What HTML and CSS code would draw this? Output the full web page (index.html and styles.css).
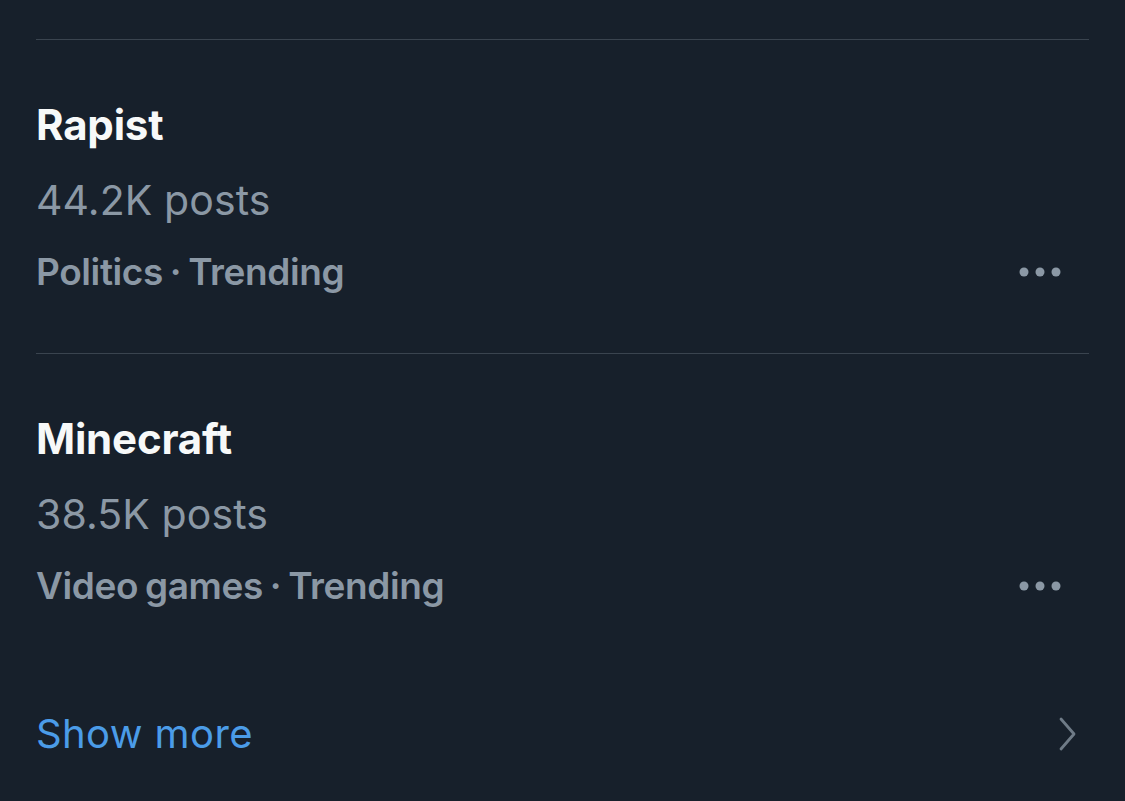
FILE: index.html
```html
<!DOCTYPE html>
<html>
<head>
<meta charset="utf-8">
<link rel="stylesheet" href="styles.css">
</head>
<body>
<div class="panel">
  <div class="trend">
    <div class="title">Rapist</div>
    <div class="count">44.2K posts</div>
    <div class="meta-row">
      <span class="meta">Politics · Trending</span>
      <svg class="dots" width="44" height="10" viewBox="0 0 44 10"><circle cx="5" cy="5" r="4.5"/><circle cx="21" cy="5" r="4.5"/><circle cx="37" cy="5" r="4.5"/></svg>
    </div>
  </div>
  <div class="trend">
    <div class="title">Minecraft</div>
    <div class="count">38.5K posts</div>
    <div class="meta-row">
      <span class="meta">Video games · Trending</span>
      <svg class="dots" width="44" height="10" viewBox="0 0 44 10"><circle cx="5" cy="5" r="4.5"/><circle cx="21" cy="5" r="4.5"/><circle cx="37" cy="5" r="4.5"/></svg>
    </div>
  </div>
  <div class="more-row">
    <span class="more">Show more</span>
    <svg class="chev" width="20" height="36" viewBox="0 0 20 36"><path d="M3 3 L16 18 L3 33" fill="none" stroke="currentColor" stroke-width="2.8" stroke-linecap="round" stroke-linejoin="round"/></svg>
  </div>
</div>
</body>
</html>
```
FILE: styles.css
```css
html, body {
  margin: 0;
  padding: 0;
  background: #17202b;
}
body {
  font-family: Inter, "Noto Sans", sans-serif;
  height: 801px;
  overflow: hidden;
}
.panel {
  padding: 39px 36px 0 36px;
}
.trend {
  border-top: 1px solid #3a444f;
  padding: 60px 0 56px 0;
}
.title {
  font-size: 42px;
  line-height: 50px;
  font-weight: 700;
  color: #f7f9f9;
  letter-spacing: -0.2px;
}
.count {
  margin-top: 25px;
  font-size: 41px;
  line-height: 50px;
  font-weight: 400;
  color: #8b98a5;
  letter-spacing: 0.1px;
}
.meta-row {
  margin-top: 22px;
  display: flex;
  align-items: center;
  justify-content: space-between;
  height: 50px;
}
.meta {
  font-size: 37px;
  line-height: 50px;
  font-weight: 600;
  color: #8b98a5;
  letter-spacing: -0.4px;
  word-spacing: -2px;
}
.dots {
  fill: #8b98a5;
  margin-right: 26px;
}
.more-row {
  margin-top: 42px;
  display: flex;
  align-items: center;
  justify-content: space-between;
  height: 50px;
}
.more {
  font-size: 40px;
  line-height: 50px;
  color: #4b9ce8;
  letter-spacing: 0.4px;
}
.chev {
  color: #6f7b87;
  margin-right: 11px;
}
```
